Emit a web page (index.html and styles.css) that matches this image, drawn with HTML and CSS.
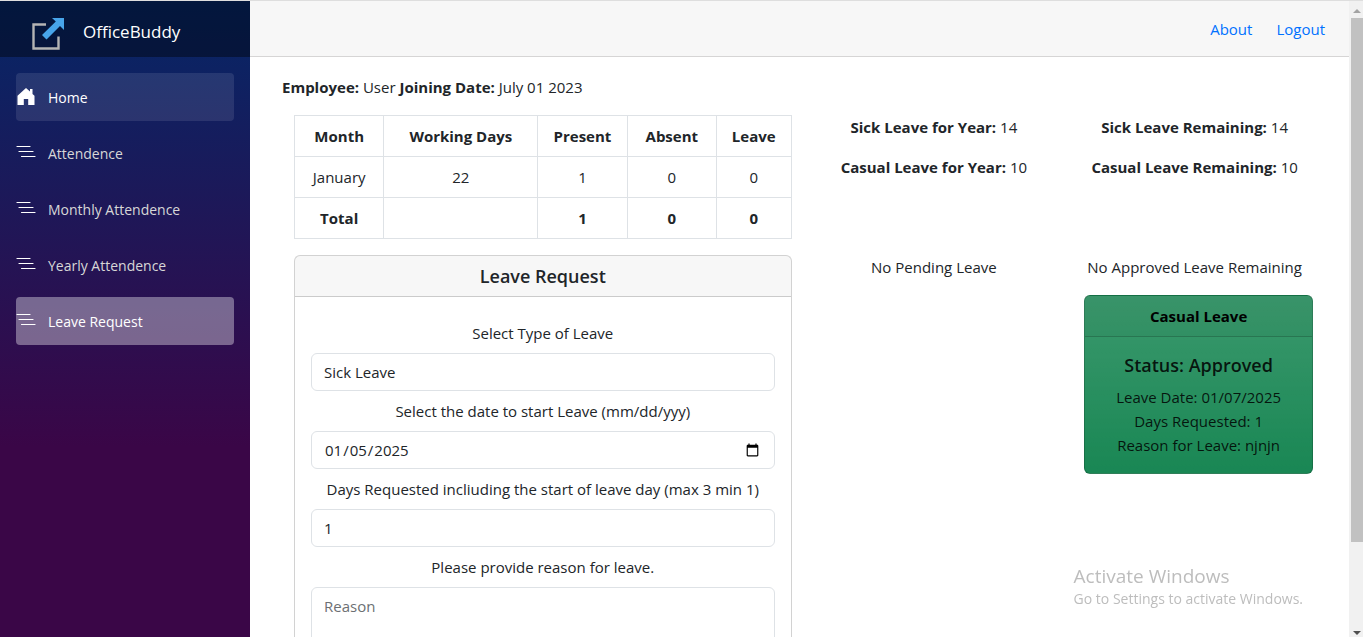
FILE: index.html
```html
<!DOCTYPE html>
<html lang="en-US">
<head>
<meta charset="utf-8">
<title>OfficeBuddy</title>
<link rel="stylesheet" href="styles.css">
</head>
<body>
<svg class="sprite" aria-hidden="true">
  <symbol id="bars" viewBox="0 0 20 20">
    <path d="M1 4.500h13M3 9.500h14M5.500 14.500h13.500" stroke="#fff" stroke-width="1.200" stroke-linecap="round" fill="none"/>
  </symbol>
</svg>
<div class="app">
  <aside class="sidebar">
    <div class="brand-row">
      <svg class="logo" viewBox="0 0 34 34" aria-hidden="true">
        <path d="M15 7.500H2.500v24h25V19.500" fill="none" stroke="#b4b4b4" stroke-width="2.400"/>
        <path d="M21 1h12v12l-4-4-13.500 13.500-4.500-4.500L24.800 4.600z" fill="#48a5ea"/>
      </svg>
      <a class="brand" href="#">OfficeBuddy</a>
    </div>
    <nav class="menu">
      <a class="menu-link hovered" href="#">
        <svg class="menu-icon" viewBox="0 0 20 20" aria-hidden="true"><path d="M10 2 1.500 9.800V19h6.300v-6h4.400v6h6.300V9.800L16.500 8V3h-2.500v2.600z" fill="#fff"/></svg>Home</a>
      <a class="menu-link" href="#"><svg class="menu-icon" aria-hidden="true"><use href="#bars"/></svg>Attendence</a>
      <a class="menu-link" href="#"><svg class="menu-icon" aria-hidden="true"><use href="#bars"/></svg>Monthly Attendence</a>
      <a class="menu-link" href="#"><svg class="menu-icon" aria-hidden="true"><use href="#bars"/></svg>Yearly Attendence</a>
      <a class="menu-link active" href="#"><svg class="menu-icon" aria-hidden="true"><use href="#bars"/></svg>Leave Request</a>
    </nav>
  </aside>
  <main class="main">
    <header class="topbar">
      <a href="#">About</a>
      <a href="#">Logout</a>
    </header>
    <article class="content">
      <p class="employee"><b>Employee:</b> User <b>Joining Date:</b> July 01 2023</p>
      <section class="row">
        <table class="summary">
          <colgroup><col class="c-month"><col class="c-days"><col class="c-present"><col class="c-absent"><col class="c-leave"></colgroup>
          <thead><tr><th>Month</th><th>Working Days</th><th>Present</th><th>Absent</th><th>Leave</th></tr></thead>
          <tbody>
            <tr><td>January</td><td>22</td><td>1</td><td>0</td><td>0</td></tr>
            <tr><th>Total</th><th></th><th>1</th><th>0</th><th>0</th></tr>
          </tbody>
        </table>
        <div class="stats">
          <p><b>Sick Leave for Year:</b> 14</p>
          <p><b>Casual Leave for Year:</b> 10</p>
        </div>
        <div class="stats">
          <p><b>Sick Leave Remaining:</b> 14</p>
          <p><b>Casual Leave Remaining:</b> 10</p>
        </div>
      </section>
      <section class="row">
        <div class="card">
          <div class="card-header"><h5>Leave Request</h5></div>
          <form class="card-body form">
            <label for="type">Select Type of Leave</label>
            <select id="type" class="field"><option>Sick Leave</option></select>
            <label for="start">Select the date to start Leave (mm/dd/yyy)</label>
            <input id="start" class="field" type="date" value="2025-01-05">
            <label for="days">Days Requested incliuding the start of leave day (max 3 min 1)</label>
            <input id="days" class="field" type="number" min="1" max="3" value="1">
            <label for="reason">Please provide reason for leave.</label>
            <textarea id="reason" class="field" rows="4" placeholder="Reason"></textarea>
          </form>
        </div>
        <div class="stats"><p>No Pending Leave</p></div>
        <div class="stats">
          <p>No Approved Leave Remaining</p>
          <div class="card approved">
            <div class="card-header"><b>Casual Leave</b></div>
            <div class="card-body">
              <h5>Status: Approved</h5>
              <div>Leave Date: 01/07/2025</div>
              <div>Days Requested: 1</div>
              <div>Reason for Leave: njnjn</div>
            </div>
          </div>
        </div>
      </section>
    </article>
  </main>
  <div class="scrollbar" aria-hidden="true">
    <svg class="arrow" viewBox="0 0 14 17"><path d="M4 12h8L8 8z" fill="#a3a3a3"/></svg>
    <div class="track"><div class="thumb"></div></div>
    <svg class="arrow" viewBox="0 0 14 17"><path d="M4 11h8l-4 4z" fill="#505050"/></svg>
  </div>
</div>
<div class="watermark">
  <div class="watermark-title">Activate Windows</div>
  <div>Go to Settings to activate Windows.</div>
</div>
</body>
</html>
```
FILE: styles.css
```css
* { box-sizing: border-box; }

body {
  margin: 0;
  font: 15px/24px "Open Sans", "Noto Sans", sans-serif;
  color: #212529;
  background: #fff;
}

p, h5 { margin: 0; }
a { color: #0071ff; text-decoration: none; }
.sprite { position: absolute; width: 0; height: 0; }

.app {
  display: flex;
  height: 100vh;
  overflow: hidden;
  border-top: 1px solid #dedede;
}

/* Sidebar */
.sidebar {
  flex: 0 0 250px;
  background: linear-gradient(180deg, #052767 0%, #3a0647 70%);
}
.brand-row {
  display: flex;
  align-items: center;
  gap: 18px;
  height: 56px;
  padding: 10px 0 0 31px;
  background: rgba(0, 0, 0, .4);
}
.logo { width: 34px; height: 34px; }
.brand {
  padding-bottom: 4px;
  font-size: 17px;
  color: #fff;
}
.menu {
  display: flex;
  flex-direction: column;
  gap: 8px;
  padding: 16px;
}
.menu-link {
  display: flex;
  align-items: center;
  height: 48px;
  padding-top: 2px;
  border-radius: 4px;
  font-size: 14px;
  color: #d7d7d7;
}
.menu-icon {
  width: 20px;
  height: 20px;
  margin: 0 12px 4px 0;
}
.hovered { background: rgba(255, 255, 255, .1); color: #fff; }
.active { background: rgba(255, 255, 255, .37); color: #fff; }

/* Main area */
.main {
  flex: 1;
  min-width: 0;
  overflow-y: auto;
  scrollbar-width: none;
}
.topbar {
  display: flex;
  align-items: center;
  justify-content: flex-end;
  gap: 24px;
  height: 56px;
  padding: 0 24px;
  border-bottom: 1px solid #d6d5d5;
  background: #f7f7f7;
}
.content { padding: 18px 24px 0 32px; }
.employee { margin-bottom: 16px; }
.row {
  display: grid;
  grid-template-columns: 2fr 1fr 1fr;
  align-items: start;
  margin-bottom: 16px;
}
.row > * { margin: 0 12px; }

.summary {
  table-layout: fixed;
  border-collapse: collapse;
  width: calc(100% - 24px);
  text-align: center;
}
.summary th, .summary td {
  height: 41px;
  padding: 8px;
  border: 1px solid #dee2e6;
}
.c-month { width: 18%; }
.c-days { width: 31%; }
.c-present { width: 18%; }
.c-absent { width: 18%; }
.c-leave { width: 15%; }

.stats { text-align: center; white-space: nowrap; }
.stats p { margin-bottom: 16px; }

/* Cards */
.card {
  border: 1px solid rgba(0, 0, 0, .175);
  border-radius: 6px;
  text-align: center;
}
.card-header {
  padding: 8px 16px;
  border-bottom: 1px solid rgba(0, 0, 0, .175);
  background: rgba(0, 0, 0, .03);
}
.card-body { padding: 16px; }
.card h5 { font-size: 18px; font-weight: 600; line-height: 24px; }
.approved {
  margin-left: 8px;
  color: #000;
  background: #198754 linear-gradient(180deg, rgba(255, 255, 255, .15), rgba(255, 255, 255, 0));
}
.approved h5 { margin-bottom: 8px; }
.approved .card-body { color: rgba(0, 0, 0, .85); }

/* Form */
.form {
  display: flex;
  flex-direction: column;
  gap: 8px;
  padding-top: 24px;
}
.field {
  appearance: none;
  width: 100%;
  height: 38px;
  padding: 6px 12px;
  border: 1px solid #dee2e6;
  border-radius: 6px;
  font: inherit;
  color: #212529;
  background: #fff;
}
textarea.field { height: 110px; }
.field::placeholder { color: #6c6f73; }

/* Scrollbar */
.scrollbar {
  display: flex;
  flex-direction: column;
  flex: 0 0 14px;
  background: #f1f1f1;
}
.arrow { flex: none; width: 14px; height: 17px; }
.track { flex: 1; padding-left: 2px; }
.thumb { height: 87%; background: #c1c1c1; }

/* System notice laid over the page */
.watermark {
  position: fixed;
  right: 60px;
  bottom: 26px;
  font-size: 14px;
  color: #bdbdbd;
  pointer-events: none;
}
.watermark-title { font-size: 19px; line-height: 22px; }
```
